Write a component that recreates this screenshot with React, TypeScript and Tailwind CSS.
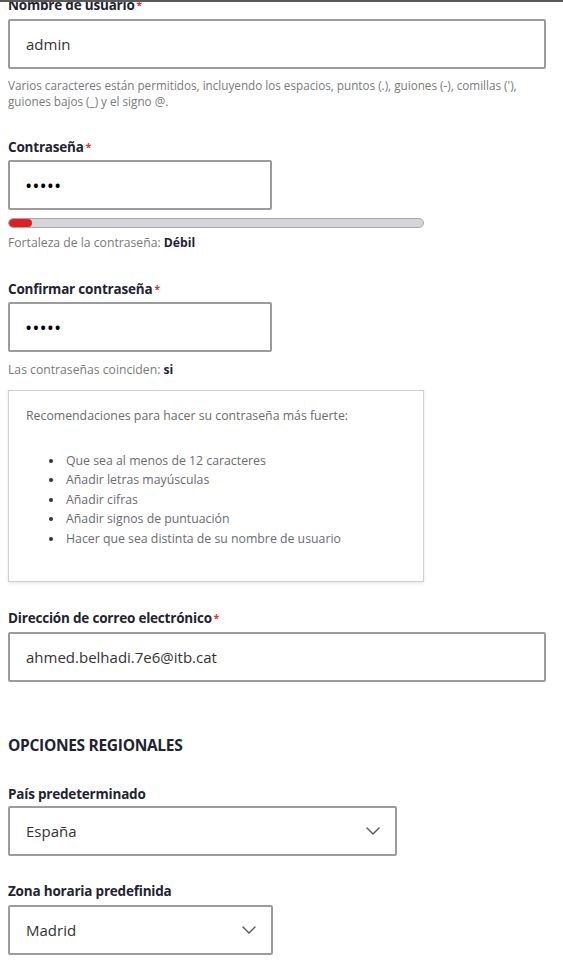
const font = { fontFamily: '"Open Sans", "Noto Sans", sans-serif' };

function Label({ text, required, className }: { text: string; required?: boolean; className?: string }) {
    return (
        <p className={"text-[13.5px] leading-[20px] font-bold text-[#222330] tracking-[-0.2px] " + (className || "")}>
            {text}
            {required && <span className="text-[#e0302f] text-[10px] align-top ml-[2px]">*</span>}
        </p>
    );
}

function Field({ children, className }: { children: React.ReactNode; className?: string }) {
    return (
        <div className={"h-[50px] border-2 border-[#9c9c9c] rounded-[2px] bg-white flex items-center pl-[16px] pr-[15px] " + (className || "")}>
            {children}
        </div>
    );
}

function Dots() {
    return <span className="text-[14px] font-bold text-black tracking-[2px]">•••••</span>;
}

function Chevron() {
    return (
        <svg width="14" height="8" viewBox="0 0 14 8" fill="none" className="text-[#555]">
            <path d="M1 1L7 7L13 1" stroke="currentColor" strokeWidth="1.4" strokeLinecap="round" strokeLinejoin="round" />
        </svg>
    );
}

export default function App() {
    const tips = [
        "Que sea al menos de 12 caracteres",
        "Añadir letras mayúsculas",
        "Añadir cifras",
        "Añadir signos de puntuación",
        "Hacer que sea distinta de su nombre de usuario",
    ];

    return (
        <div style={font} className="w-[563px] h-[966px] bg-white border-t-2 border-[#5a5a5a] overflow-hidden">
            <div className="flex flex-col px-[8px]">
                <Label text="Nombre de usuario" required className="mt-[-7px] mb-[4px]" />
                <Field className="w-[538px]">
                    <span className="text-[15px] text-[#333]">admin</span>
                </Field>
                <p className="mt-[8px] text-[11.7px] leading-[16px] text-[#7a7a7a] whitespace-nowrap">
                    Varios caracteres están permitidos, incluyendo los espacios, puntos (.), guiones (-), comillas ('),
                    <br />
                    guiones bajos (_) y el signo @.
                </p>

                <Label text="Contraseña" required className="mt-[28px] mb-[3px]" />
                <Field className="w-[264px]">
                    <Dots />
                </Field>
                <div className="mt-[8px] h-[10px] w-[416px] rounded-full bg-[#d6d6da] border border-[#a9a9ad] overflow-hidden">
                    <div className="h-full w-[23px] rounded-full bg-[#db2222]" />
                </div>
                <p className="mt-[7px] text-[12.2px] leading-[16px] text-[#7a7a7a]">
                    Fortaleza de la contraseña: <span className="font-bold text-[#222330]">Débil</span>
                </p>

                <Label text="Confirmar contraseña" required className="mt-[28px] mb-[3px]" />
                <Field className="w-[264px]">
                    <Dots />
                </Field>
                <p className="mt-[10px] text-[12.2px] leading-[16px] text-[#7a7a7a]">
                    Las contraseñas coinciden: <span className="font-bold text-[#222330]">si</span>
                </p>

                <div className="mt-[12px] h-[192px] w-[416px] border border-[#cfcfd4] shadow-[0_1px_3px_rgba(0,0,0,0.12)] pt-[17px] pl-[17px]">
                    <p className="text-[12.3px] leading-[16px] text-[#6b6b6b]">Recomendaciones para hacer su contraseña más fuerte:</p>
                    <ul className="mt-[27px] pl-[23px]">
                        {tips.map((t) => (
                            <li key={t} className="flex items-center h-[19.5px] text-[12.3px] text-[#6b6b73]">
                                <span className="w-[4px] h-[4px] rounded-full bg-[#333] mr-[13px]" />
                                {t}
                            </li>
                        ))}
                    </ul>
                </div>

                <Label text="Dirección de correo electrónico" required className="mt-[26px] mb-[4px]" />
                <Field className="w-[538px]">
                    <span className="text-[15px] text-[#333]">ahmed.belhadi.7e6@itb.cat</span>
                </Field>

                <h2 className="mt-[51px] text-[15.5px] leading-[24px] font-bold text-[#222330] tracking-[-0.3px]">OPCIONES REGIONALES</h2>

                <Label text="País predeterminado" className="mt-[27px] mb-[2px]" />
                <Field className="w-[389px] justify-between">
                    <span className="text-[15px] text-[#333]">España</span>
                    <Chevron />
                </Field>

                <Label text="Zona horaria predefinida" className="mt-[25px] mb-[4px]" />
                <Field className="w-[265px] justify-between">
                    <span className="text-[15px] text-[#333]">Madrid</span>
                    <Chevron />
                </Field>
            </div>
        </div>
    );
}
